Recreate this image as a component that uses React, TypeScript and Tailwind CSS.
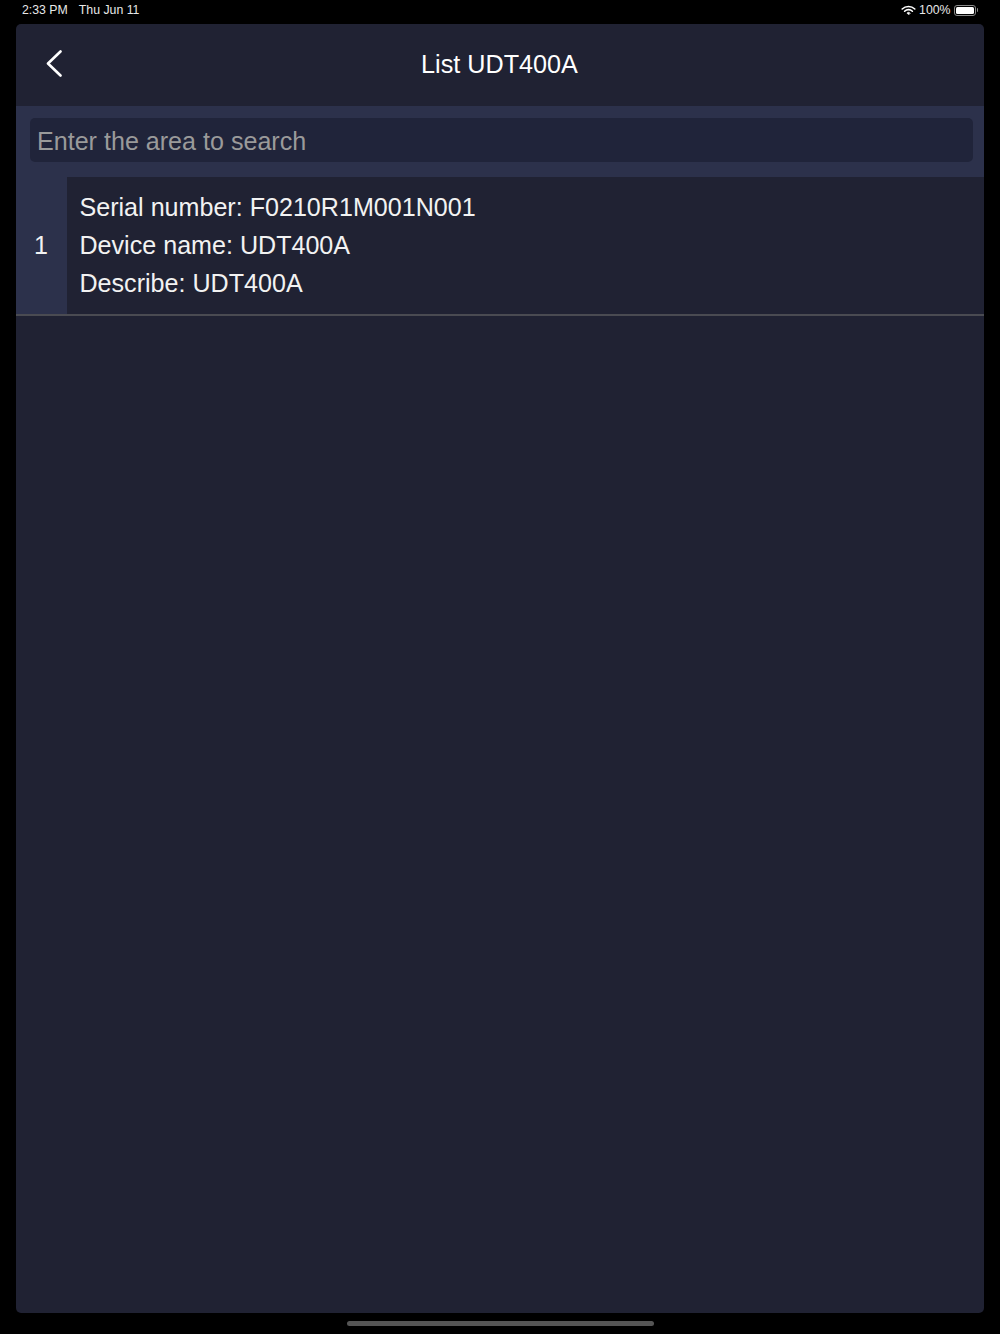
const FONT = "font-['Liberation_Sans',Arial,sans-serif]";

function StatusBar() {
  return (
    <div className="flex h-6 items-start justify-between pl-[22px] pr-[22px] pt-[3px] text-[12.3px] leading-[14px] text-[#e8e8e8]">
      <div className="flex gap-[11px]">
        <span>2:33 PM</span>
        <span>Thu Jun 11</span>
      </div>
      <div className="flex items-center gap-[3.5px]">
        <svg width="15" height="11" viewBox="0 0 15 11" fill="none" stroke="#ffffff" strokeLinecap="round">
          <path d="M1.2 4 A9 9 0 0 1 13.8 4" strokeWidth="1.6" />
          <path d="M3.6 6.2 A5.6 5.6 0 0 1 11.4 6.2" strokeWidth="1.6" />
          <path d="M7.5 9.6 L5.9 8 A2.3 2.3 0 0 1 9.1 8 Z" fill="#ffffff" strokeWidth="0.6" />
        </svg>
        <span>100%</span>
        <div className="flex items-center">
          <div className="flex h-[11px] w-[22px] rounded-[3px] border border-[#8a8a8a] p-[1px]">
            <div className="flex-1 rounded-[1.5px] bg-white" />
          </div>
          <div className="ml-[1px] h-[4px] w-[1px] rounded-r-sm bg-[#8a8a8a]" />
        </div>
      </div>
    </div>
  );
}

function Header() {
  return (
    <header className="relative flex h-[82px] items-center justify-center pb-[2px] pr-[1px]">
      <button type="button" aria-label="Back" className="absolute left-[30px] top-[26px]">
        <svg width="16" height="27" viewBox="0 0 16 27" fill="none" stroke="#ffffff" strokeWidth="2.6" strokeLinecap="round" strokeLinejoin="round">
          <path d="M14.5 1.5 L2 13.5 L14.5 25.5" />
        </svg>
      </button>
      <h1 className="text-[25.2px] leading-[30px] text-white">List UDT400A</h1>
    </header>
  );
}

function SearchBar() {
  return (
    <div className="flex h-[71px] items-center bg-[#2c314b] pb-[3px] pl-[14px] pr-[11px]">
      <div className="flex h-[44px] flex-1 items-center rounded-[5px] bg-[#20243a] px-[7px] pt-[3px] text-[25.1px] text-[#9a9a9a]">
        Enter the area to search
      </div>
    </div>
  );
}

function DeviceRow() {
  return (
    <div className="flex h-[139px] border-b-2 border-[#4a4b52]">
      <div className="flex w-[51px] items-center justify-center bg-[#2c314b] pr-[1px] text-[25.1px] text-[#f2f2f2]">1</div>
      <div className="flex flex-1 flex-col justify-center pb-[1px] pl-[12.5px] text-[25.1px] leading-[38px] text-[#f2f2f2]">
        <div>Serial number: F0210R1M001N001</div>
        <div>Device name: UDT400A</div>
        <div>Describe: UDT400A</div>
      </div>
    </div>
  );
}

export default function App() {
  return (
    <div className={`flex h-[1334px] w-[1000px] flex-col overflow-hidden bg-black ${FONT}`}>
      <StatusBar />
      <div className="mx-4 flex flex-1 flex-col overflow-hidden rounded-[5px] bg-[#202233]">
        <Header />
        <SearchBar />
        <DeviceRow />
      </div>
      <div className="flex h-[21px] items-start justify-center pt-[8px]">
        <div className="h-[5px] w-[307px] rounded-full bg-[#555555]" />
      </div>
    </div>
  );
}
